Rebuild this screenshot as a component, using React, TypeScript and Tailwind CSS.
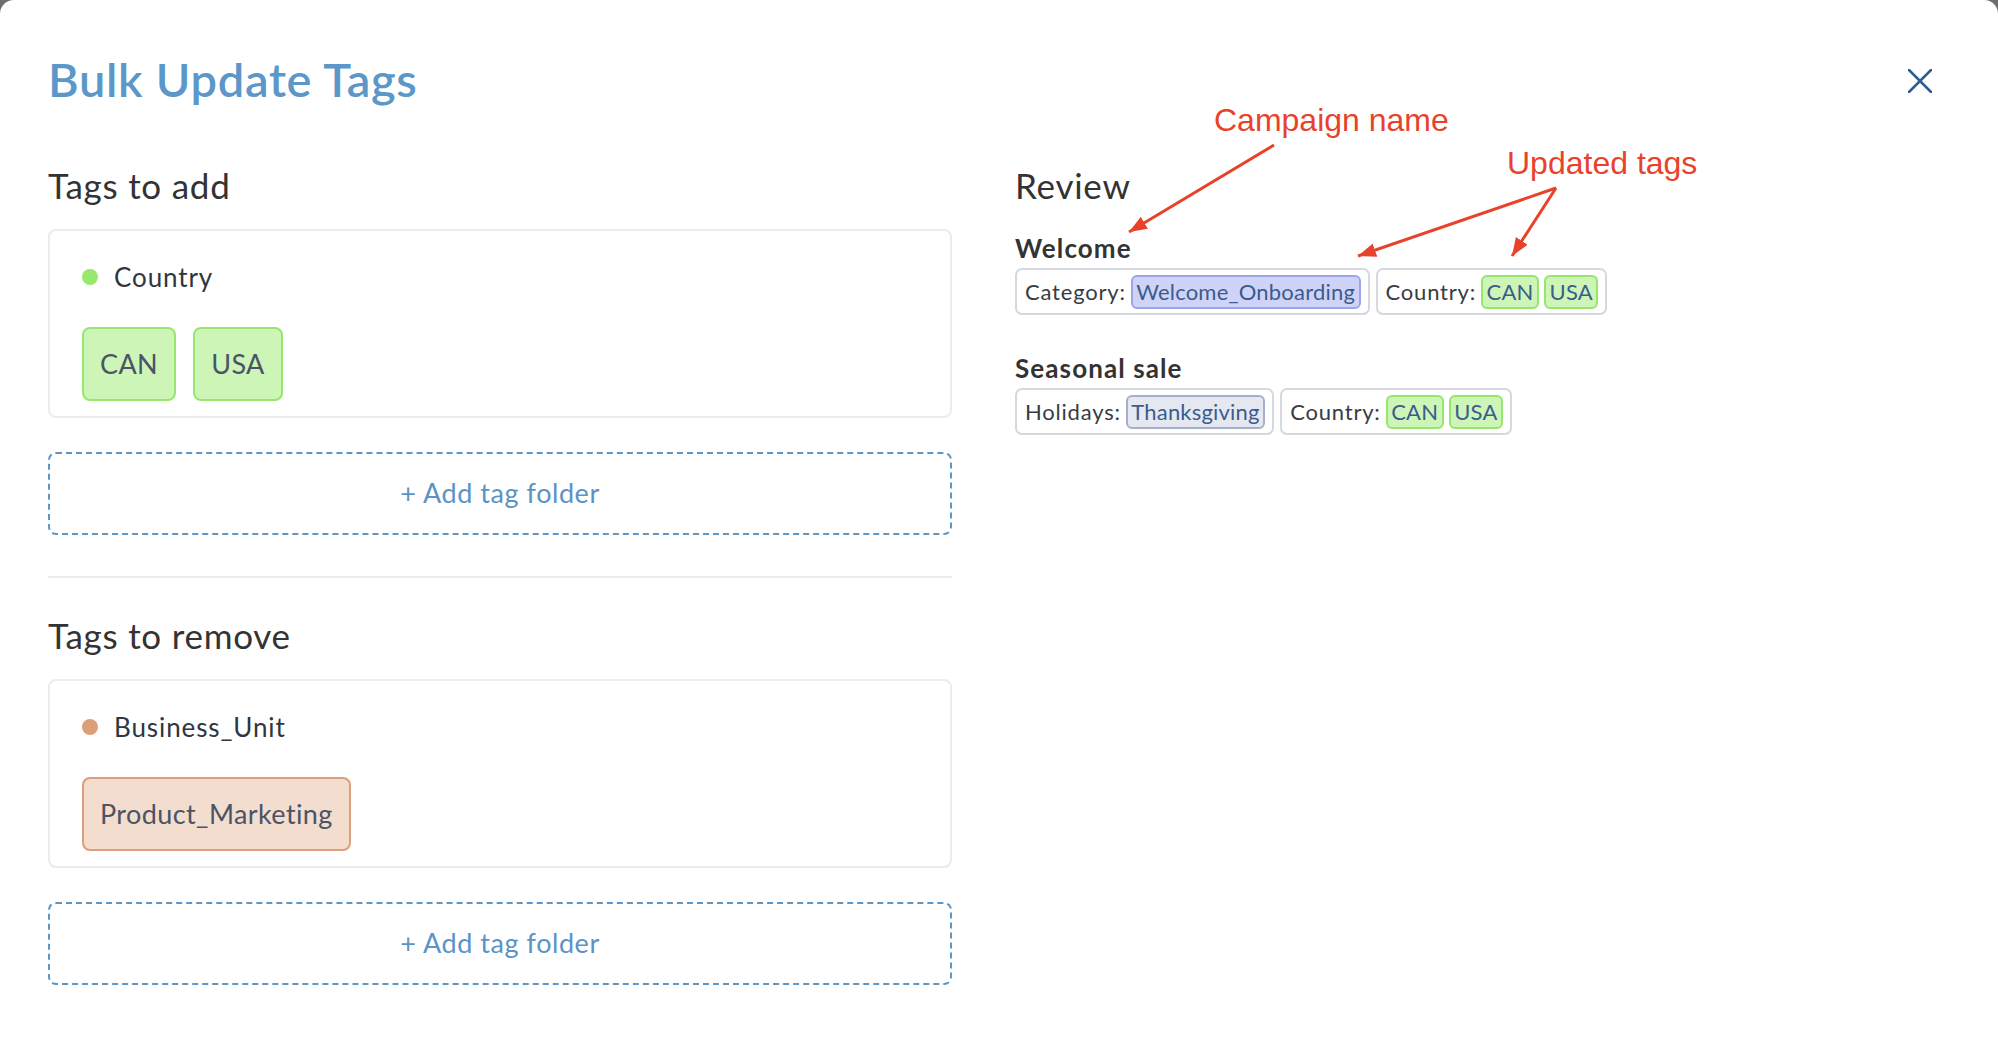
import React from "react";

type Chip = { label: string };

type ReviewGroupData = {
  label: string;
  tone: "blue" | "slate" | "green";
  tags: string[];
};

type Campaign = {
  name: string;
  groups: ReviewGroupData[];
};

const campaigns: Campaign[] = [
  {
    name: "Welcome",
    groups: [
      { label: "Category:", tone: "blue", tags: ["Welcome_Onboarding"] },
      { label: "Country:", tone: "green", tags: ["CAN", "USA"] },
    ],
  },
  {
    name: "Seasonal sale",
    groups: [
      { label: "Holidays:", tone: "slate", tags: ["Thanksgiving"] },
      { label: "Country:", tone: "green", tags: ["CAN", "USA"] },
    ],
  },
];

const toneClasses = {
  blue: "border-[#9ca4ea] bg-[#cfd3f7]",
  slate: "border-[#a5afcb] bg-[#e5e8f1]",
  green: "border-[#95e66c] bg-[#ccf5b7]",
};

function FolderCard({
  name,
  dotClass,
  chipClass,
  chips,
}: {
  name: string;
  dotClass: string;
  chipClass: string;
  chips: Chip[];
}) {
  return (
    <div className="mt-[23px] rounded-[8px] border-2 border-[#ebebf0] bg-white pb-[15px] pl-[32px] pt-[30px]">
      <div className="flex h-[32px] items-center gap-[16px]">
        <span className={`h-4 w-4 rounded-full ${dotClass}`} />
        <span className="text-[26px] leading-[32px] tracking-[0.9px] text-[#2f3640]">{name}</span>
      </div>

      <div className="mt-[34px] flex gap-[17px]">
        {chips.map((chip) => (
          <span
            key={chip.label}
            className={`flex h-[74px] items-center rounded-[8px] border-2 px-[16px] text-[27px] tracking-[0.4px] text-[#4a5466] ${chipClass}`}
          >
            {chip.label}
          </span>
        ))}
      </div>
    </div>
  );
}

function AddFolder() {
  return (
    <button
      type="button"
      className="mt-[34px] flex h-[83px] w-full items-center justify-center rounded-[8px] border-2 border-dashed border-[#5d97c8] text-[27px] tracking-[0.55px] text-[#5b93c7]"
    >
      + Add tag folder
    </button>
  );
}

function ReviewGroup({ group }: { group: ReviewGroupData }) {
  return (
    <div className="flex h-[47px] items-center gap-[5px] rounded-[7px] border-2 border-[#d5d8de] pl-[8px] pr-[7px]">
      <span className="text-[22px] tracking-[0.8px] text-[#373c44]">{group.label}</span>
      {group.tags.map((tag) => (
        <span
          key={tag}
          className={`flex h-[34px] items-center rounded-[6px] border-2 px-[3.5px] text-[22px] tracking-[0.2px] text-[#3b5c8d] ${toneClasses[group.tone]}`}
        >
          {tag}
        </span>
      ))}
    </div>
  );
}

export default function App() {
  return (
    <div className="h-screen w-full overflow-hidden bg-[#6e6e6e] font-['Lato','Noto_Sans',sans-serif]">
      <div className="relative h-full rounded-t-[14px] bg-white pl-[48px] pt-[51px]">
        {/* header */}
        <div className="flex h-[56px] items-center justify-between">
          <h1 className="text-[47px] font-semibold leading-[56px] tracking-[0.7px] text-[#5b97c9]">
            Bulk Update Tags
          </h1>
          <button type="button" className="mr-[66px] mt-1 text-[#2f5d92]">
            <svg width="24" height="24" viewBox="0 0 24 24">
              <path d="M1 1 L23 23 M23 1 L1 23" stroke="currentColor" strokeWidth="2.5" strokeLinecap="round" />
            </svg>
          </button>
        </div>

        <div className="mt-[57px] flex gap-[63px]">
          {/* left column */}
          <div className="w-[904px]">
            <h2 className="text-[35px] leading-[42px] tracking-[0.75px] text-[#333]">Tags to add</h2>
            <FolderCard
              name="Country"
              dotClass="bg-[#97e86b]"
              chipClass="border-[#97e66f] bg-[#ccf5b7]"
              chips={[{ label: "CAN" }, { label: "USA" }]}
            />
            <AddFolder />

            <div className="mt-[41px] h-[2px] bg-[#ececf0]" />

            <h2 className="mt-[36px] text-[35px] leading-[42px] tracking-[0.75px] text-[#333]">Tags to remove</h2>
            <FolderCard
              name="Business_Unit"
              dotClass="bg-[#dc9f7a]"
              chipClass="border-[#daa07d] bg-[#f3ddcf]"
              chips={[{ label: "Product_Marketing" }]}
            />
            <AddFolder />
          </div>

          {/* review column */}
          <div className="flex-1">
            <h2 className="text-[35px] leading-[42px] tracking-[0.75px] text-[#333]">Review</h2>
            {campaigns.map((campaign, i) => (
              <div key={campaign.name} className={i === 0 ? "mt-[26px]" : "mt-[37px]"}>
                <h3 className="text-[26px] font-bold leading-[32px] tracking-[1.1px] text-[#333]">{campaign.name}</h3>
                <div className="mt-[4px] flex gap-[6px]">
                  {campaign.groups.map((group) => (
                    <ReviewGroup key={group.label} group={group} />
                  ))}
                </div>
              </div>
            ))}
          </div>
        </div>

        {/* annotations */}
        <span className="absolute left-[1214px] top-[104px] font-['Liberation_Sans',Arial,sans-serif] text-[32px] leading-none text-[#e8432a]">
          Campaign name
        </span>
        <span className="absolute left-[1507px] top-[147px] font-['Liberation_Sans',Arial,sans-serif] text-[32px] leading-none text-[#e8432a]">
          Updated tags
        </span>
        <svg className="pointer-events-none absolute left-0 top-0" width="1998" height="1058" viewBox="0 0 1998 1058">
          <defs>
            <marker id="head" markerWidth="20" markerHeight="16" refX="18" refY="7" orient="auto" markerUnits="userSpaceOnUse">
              <path d="M0 0 L18 7 L0 14 Z" fill="#e8432a" />
            </marker>
          </defs>
          <g stroke="#e8432a" strokeWidth="3" fill="none">
            <line x1="1274" y1="145" x2="1129" y2="232" markerEnd="url(#head)" />
            <line x1="1556" y1="188" x2="1358" y2="256" markerEnd="url(#head)" />
            <line x1="1556" y1="188" x2="1512" y2="256" markerEnd="url(#head)" />
          </g>
        </svg>
      </div>
    </div>
  );
}
